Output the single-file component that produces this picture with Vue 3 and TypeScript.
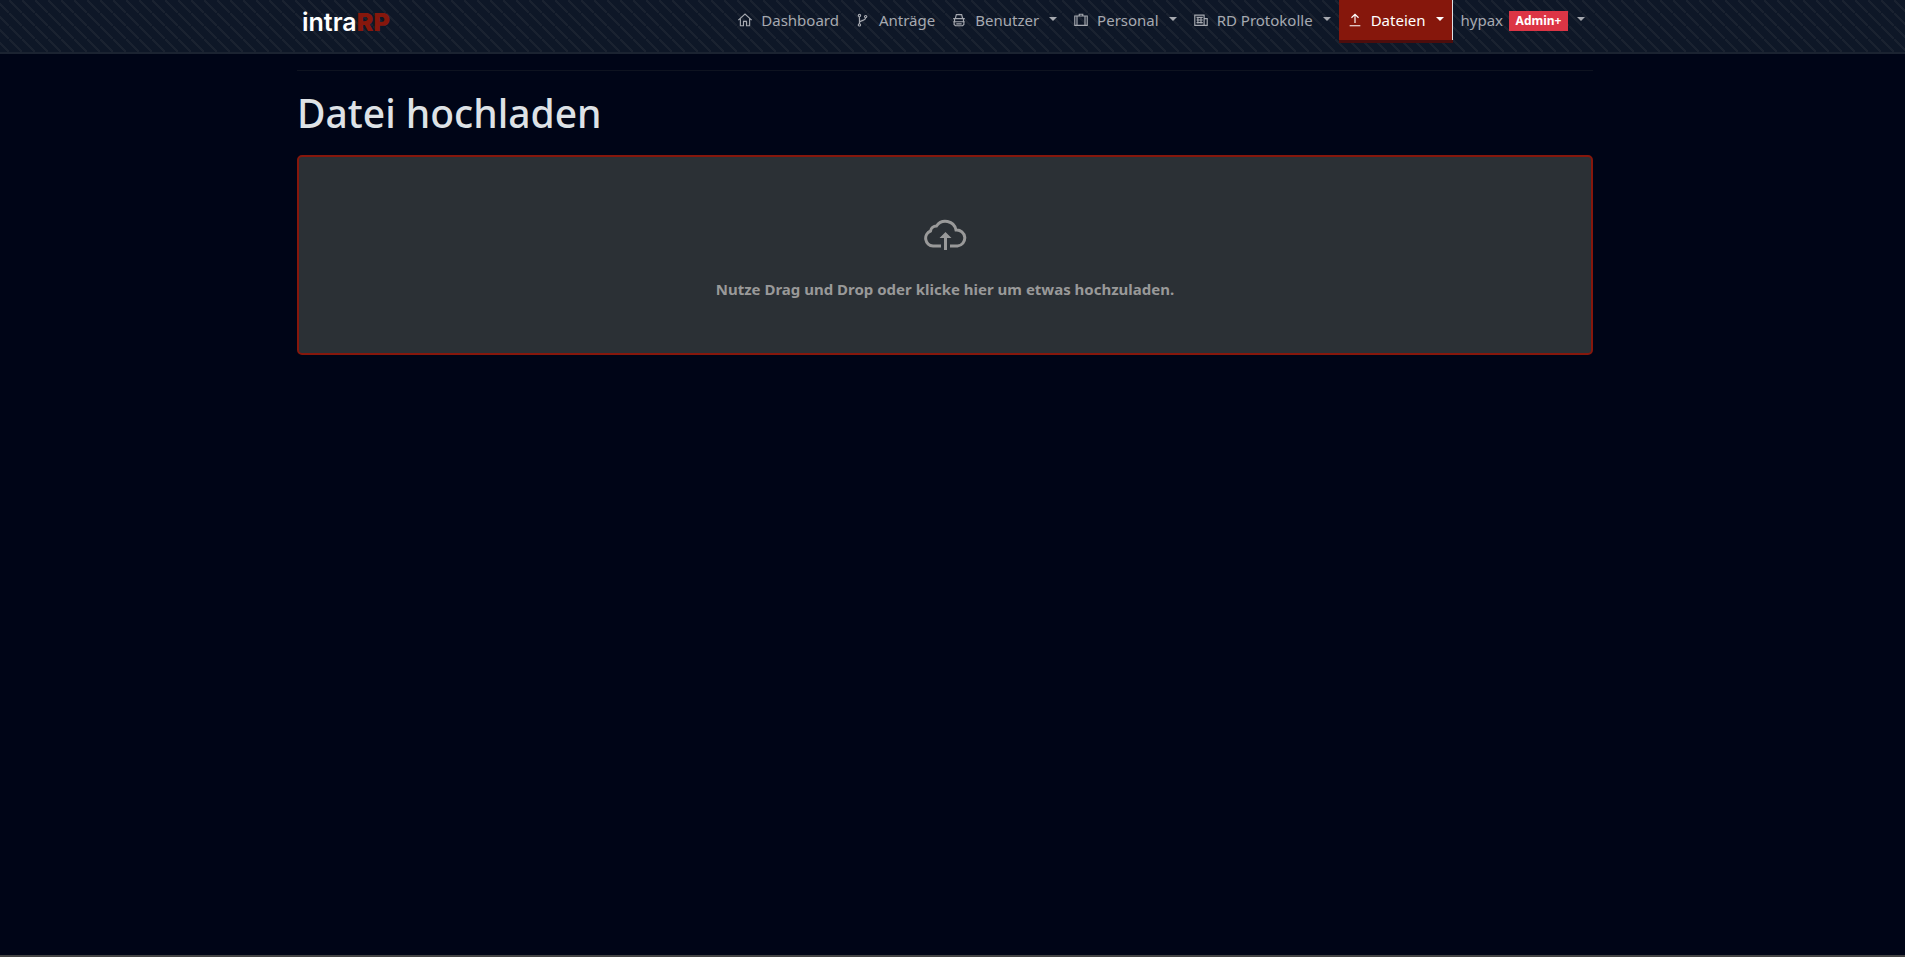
<script setup lang="ts">
interface NavItem {
  label: string
  icon: string
  menu: boolean
  active?: boolean
}

const items: NavItem[] = [
  { label: 'Dashboard', icon: 'home', menu: false },
  { label: 'Anträge', icon: 'branch', menu: false },
  { label: 'Benutzer', icon: 'helmet', menu: true },
  { label: 'Personal', icon: 'suitcase', menu: true },
  { label: 'RD Protokolle', icon: 'news', menu: true },
  { label: 'Dateien', icon: 'upload', menu: true, active: true },
]

const paths: Record<string, string> = {
  home: 'M0.5 8.2 8 1.2l7.5 7M2.8 6.5v8h3.5V9.5h3.4v5h3.5v-8',
  branch: 'M4 4.5v8M4 11c0-3 7-1.5 7-5.5M2.7 3a1.3 1.3 0 1 0 2.6 0a1.3 1.3 0 1 0-2.6 0M9.7 4.2a1.3 1.3 0 1 0 2.6 0a1.3 1.3 0 1 0-2.6 0M2.7 13.5a1.3 1.3 0 1 0 2.6 0a1.3 1.3 0 1 0-2.6 0',
  helmet: 'M4 6 5 2h6l1 4M1.5 6.5h13M3 6.5v3.5h10V6.5M1.5 10h13M2.5 10v3l1.5 1.5h8l1.5-1.5v-3M5 12.3h6',
  suitcase: 'M1 3.5h14v10.5H1zM6 3.5v-2h4v2M3.5 3.5v10.5M12.5 3.5v10.5',
  news: 'M1 2.5h10.5v11.5H1zM11.5 6.5H15v7.5h-3.5M3 5h7M3 8h7M3 11h7M4.5 5v7M8 5v7',
  upload: 'M8 11.5V1.5M4 5.5 8 1.5l4 4M2 14.5h12',
}
</script>

<template>
  <div class="page">
    <header class="navbar">
      <div class="container bar">
        <a class="brand" href="#">intra<span>RP</span></a>
        <nav class="menu" aria-label="Hauptnavigation">
          <a v-for="item in items" :key="item.label" href="#" class="link" :class="{ active: item.active }">
            <svg class="icon" viewBox="-1 -1 18 18" aria-hidden="true"><path :d="paths[item.icon]" /></svg>
            <span>{{ item.label }}</span>
            <i v-if="item.menu" class="caret"></i>
          </a>
          <a href="#" class="link user">
            <span>hypax</span>
            <span class="badge">Admin+</span>
            <i class="caret"></i>
          </a>
        </nav>
      </div>
    </header>
    <main class="container content">
      <hr />
      <h1>Datei hochladen</h1>
      <button type="button" class="dropzone">
        <svg class="cloud" viewBox="0 0 44 32" aria-hidden="true">
          <path class="outline" d="M18 27H10A7.8 7.8 0 0 1 7.5 12A6 6 0 0 1 13.5 7A10.8 10.8 0 0 1 33 11A8 8 0 0 1 34.5 27H27" />
          <path class="arrow" d="M21 31V19H16.5L22.5 13 28.5 19H24V31Z" />
        </svg>
        <span>Nutze Drag und Drop oder klicke hier um etwas hochzuladen.</span>
      </button>
    </main>
    <footer class="footer"></footer>
  </div>
</template>

<style>
body {
  margin: 0;
  background: #000517;
}
</style>

<style scoped>
.page {
  min-height: 100vh;
  display: flex;
  flex-direction: column;
  background: #000517;
  color: #dee2e6;
  font-family: "Noto Sans", sans-serif;
  font-size: 15px;
  line-height: 24px;
}
.navbar {
  height: 52px;
  padding-right: 15px;
  border-bottom: 2px solid #1b2331;
  background-color: #0e1727;
  background-image: linear-gradient(45deg, transparent 46%, #1a2230 46%, #1a2230 54%, transparent 54%);
  background-size: 13px 13px;
  background-position: 9px 0;
}
.container {
  width: 100%;
  max-width: 1320px;
  margin: 0 auto;
  padding: 0 12px;
  box-sizing: border-box;
}
.bar {
  display: flex;
  align-items: flex-start;
  justify-content: space-between;
}
.brand {
  padding: 10px 5px;
  color: #fff;
  font-family: Inter, sans-serif;
  font-size: 25px;
  font-weight: 600;
  text-decoration: none;
}
.brand span {
  color: #86170c;
  font-weight: 900;
}
.menu {
  display: flex;
}
.link {
  display: flex;
  align-items: center;
  gap: 8px;
  height: 40px;
  padding: 0 8px;
  color: #a6a9b0;
  text-decoration: none;
}
.active {
  color: #fff;
  background: #86170c;
  border-right: 1px solid #dee2e6;
  box-shadow: 0 3px 0 #4d0d0c;
}
.icon {
  width: 16px;
  height: 16px;
  fill: none;
  stroke: currentColor;
  stroke-width: 1.3;
}
.caret {
  margin-left: 2px;
  margin-bottom: 2px;
  border: 4px solid transparent;
  border-top-color: currentColor;
  border-bottom: 0;
}
.user {
  gap: 6px;
}
.badge {
  width: 59px;
  height: 20px;
  margin-top: 2px;
  color: #fff;
  background: #dc3545;
  font-size: 12px;
  font-weight: 700;
  line-height: 20px;
  text-align: center;
}
.user .caret {
  margin-left: 3px;
}
.content {
  flex: 1;
  max-width: 1335px;
  padding-right: 27px;
}
hr {
  margin: 16px 0 18px;
  border: 0;
  border-top: 1px solid #0e1320;
}
h1 {
  margin: 0 0 18px;
  font-size: 39px;
  font-weight: 500;
  line-height: 48px;
}
.dropzone {
  width: 100%;
  height: 200px;
  display: flex;
  flex-direction: column;
  align-items: center;
  justify-content: center;
  gap: 26px;
  padding: 10px 0 0;
  border: 2px solid #86170c;
  border-radius: 5px;
  background: #2b3035;
  color: #999;
  font: inherit;
  font-weight: 700;
}
.cloud {
  width: 44px;
  height: 32px;
}
.outline {
  fill: none;
  stroke: currentColor;
  stroke-width: 3;
}
.arrow {
  fill: currentColor;
}
.footer {
  height: 2px;
  background: #444;
}
</style>
